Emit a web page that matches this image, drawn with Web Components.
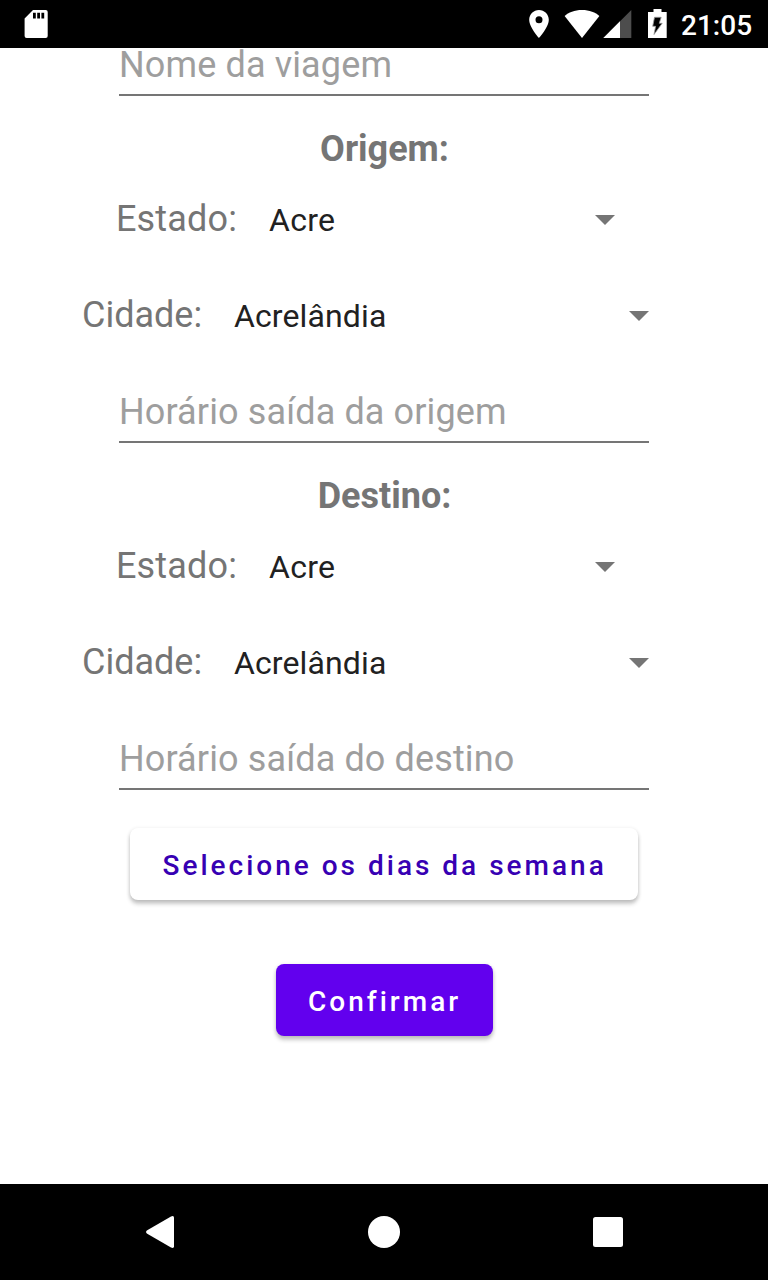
<!DOCTYPE html>
<html lang="pt-BR">
<head>
<meta charset="utf-8">
<title>Nova viagem</title>
<style>
html,body{margin:0;padding:0;height:100%;background:#fff;font-family:Roboto,"Liberation Sans",sans-serif}
</style>
</head>
<body>
<travel-screen></travel-screen>
<script>
const define = (name, html) => {
  const t = document.createElement('template');
  t.innerHTML = html;
  customElements.define(name, class extends HTMLElement {
    constructor() {
      super();
      this.attachShadow({mode: 'open'}).appendChild(t.content.cloneNode(true));
    }
  });
};

define('status-bar', `
<style>
:host{display:flex;height:48px;box-sizing:border-box;padding:9px 16px 0 24px;background:#000;color:#fff}
svg{display:block;flex:none}
.spacer{flex:1}
.time{font-size:28px;line-height:33px;font-weight:500;width:71px;white-space:nowrap;text-align:right}
.pin{margin-right:15px}.wifi{margin-right:3px}.cell{margin-right:16px}.bat{margin-right:14px}
</style>
<svg width="24" height="30" viewBox="0 0 24 30"><path fill="#fff" fill-rule="evenodd" d="M9 1h12.700q2 0 2 2v24q0 2-2 2H2.600q-2 0-2-2V9.400zM9 3.800v5.600h2.800V3.800zM13.200 3.800v5.600H16V3.800zM17.400 3.800v5.600h2.800V3.800z"/></svg>
<span class="spacer"></span>
<svg class="pin" width="20" height="30" viewBox="0 0 20 30"><path fill="#fff" fill-rule="evenodd" d="M10 1C4.600 1 .2 5.400.2 10.800.2 18.200 10 29 10 29s9.800-10.800 9.800-18.200C19.800 5.400 15.400 1 10 1zm0 13.300a3.500 3.500 0 1 1 0-7 3.500 3.500 0 0 1 0 7z"/></svg>
<svg class="wifi" width="36" height="30" viewBox="0 0 36 30"><path fill="#fff" d="M18 29 .6 7.100C4.500 3.400 10.500 1 18 1s13.500 2.400 17.400 6.100z"/></svg>
<svg class="cell" width="29" height="30" viewBox="0 0 29 30"><path fill="#4d4d4d" d="M28.300 1v28H.3z"/><path fill="#fff" d="M17 12.300V29H.3z"/></svg>
<svg class="bat" width="19" height="30" viewBox="0 0 19 30"><path fill="#fff" d="M5.500 0h8v3h5.200v26H0V3h5.500z"/><path fill="#000" stroke="#999" stroke-width=".8" d="M6.500 8.300h6.700l-2 6h3L6 25.500l1.600-8.200H4.700z"/></svg>
<span class="time">21:05</span>`);

define('text-field', `
<style>
:host{display:block;width:530px;box-sizing:border-box;height:48px;margin:0 auto;border-bottom:2px solid #757575;color:#9e9e9e;font-size:36px;line-height:34px;letter-spacing:.13px;white-space:nowrap}
</style><slot></slot>`);

define('section-title', `
<style>
:host{display:block;margin:32px 0 1px;padding-left:1px;text-align:center;color:#757575;font-size:36px;line-height:42px;font-weight:700}
</style><slot></slot>`);

define('drop-down', `
<style>
:host{display:grid;grid-template-columns:152px 1fr 48px;align-items:center;height:96px;box-sizing:border-box;margin:0 105px 0 82px;color:#757575;font-size:36px;line-height:42px;white-space:nowrap}
:host([narrow]){margin:0 139px 0 116px;grid-template-columns:153px 1fr 48px;letter-spacing:.15px}
.value{color:#212121;font-size:32px;line-height:38px;padding-top:1px;letter-spacing:.12px}
:host([narrow]) .value{letter-spacing:.25px}
svg{display:block}
</style>
<span><slot name="label"></slot></span><span class="value"><slot></slot></span>
<svg width="48" height="48" viewBox="0 0 24 24"><path fill="#757575" d="M7 10l5 5 5-5z"/></svg>`);

define('stop-form', `
<style>
:host{display:block}
::slotted(text-field){margin-top:32px}
</style>
<section-title><slot name="title"></slot></section-title>
<drop-down narrow><span slot="label">Estado:</span>Acre</drop-down>
<drop-down><span slot="label">Cidade:</span>Acrelândia</drop-down>
<slot></slot>`);

define('push-button', `
<style>
:host{display:block;width:fit-content;margin:0 auto;padding-left:.7px}
button{all:unset;display:block;box-sizing:border-box;height:72px;padding:3px 31.500px 0 32px;border-radius:8px;background:var(--fill,#6200ee);color:var(--ink,#fff);font-size:28px;line-height:33px;font-weight:500;letter-spacing:3px;white-space:nowrap;box-shadow:0 4px 4px rgba(0,0,0,.2),0 1px 4px rgba(0,0,0,.12)}
</style><button><slot></slot></button>`);

define('nav-bar', `
<style>
:host{display:flex;height:96px;background:#000;align-items:center;justify-content:center;gap:176px}
svg{display:block}
</style>
<svg width="48" height="48" viewBox="0 0 48 48"><path fill="#fff" d="M10.800 22.500 35 8.400q3-1.300 3 1.300v28.600q0 2.600-3 1.300L10.800 25.500q-1.800-1.500 0-3z"/></svg>
<svg width="48" height="48" viewBox="0 0 48 48"><circle fill="#fff" cx="24" cy="24" r="16"/></svg>
<svg width="48" height="48" viewBox="0 0 48 48"><rect fill="#fff" x="9" y="9" width="30" height="30" rx="2.500"/></svg>`);

define('travel-screen', `
<style>
:host{display:flex;flex-direction:column;height:1280px;width:768px}
main{flex:1;min-height:0}
.days{--fill:#fff;--ink:#3700b3;margin-top:38px}
.ok{margin-top:64px}
</style>
<status-bar></status-bar>
<main>
<text-field>Nome da viagem</text-field>
<stop-form><span slot="title">Origem:</span><text-field>Horário saída da origem</text-field></stop-form>
<stop-form><span slot="title">Destino:</span><text-field>Horário saída do destino</text-field></stop-form>
<push-button class="days">Selecione os dias da semana</push-button>
<push-button class="ok">Confirmar</push-button>
</main>
<nav-bar></nav-bar>`);
</script>
</body>
</html>
